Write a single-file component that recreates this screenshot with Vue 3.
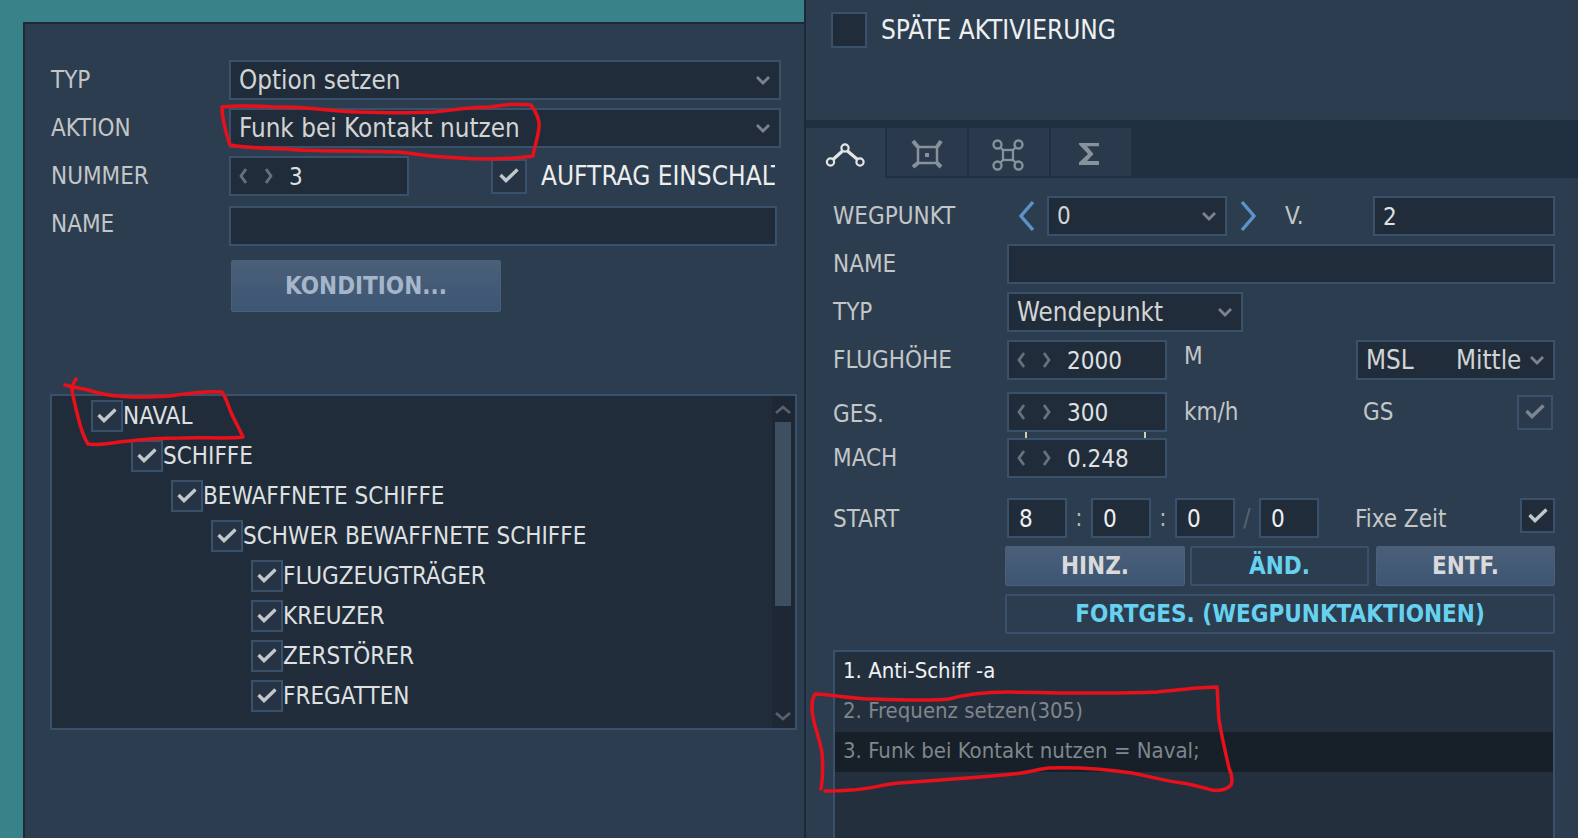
<script setup>
const tree = [
  { level: 0, text: 'NAVAL' },
  { level: 1, text: 'SCHIFFE' },
  { level: 2, text: 'BEWAFFNETE SCHIFFE' },
  { level: 3, text: 'SCHWER BEWAFFNETE SCHIFFE' },
  { level: 4, text: 'FLUGZEUGTRÄGER' },
  { level: 4, text: 'KREUZER' },
  { level: 4, text: 'ZERSTÖRER' },
  { level: 4, text: 'FREGATTEN' }
]
const actions = [
  { text: '1. Anti-Schiff -a', cls: 'on' },
  { text: '2. Frequenz setzen(305)', cls: 'off' },
  { text: '3. Funk bei Kontakt nutzen = Naval;', cls: 'off sel' }
]
const ink = [
  'M222 107 C250 104 270 108 286 107 C310 107 335 112 357 112 C385 113 415 113 434 112 C455 110 470 107 490 107 C505 104 522 104 531 105 C536 112 540 120 539 127 C538 138 534 148 533 156 C510 159 485 160 459 158 C440 157 425 156 408 153 C395 151 375 152 357 151 C330 151 305 151 286 149 C265 148 245 148 230 145 C225 130 222 118 222 107',
  'M65 385 C72 387 80 388 88 390 C98 393 108 396 119 396 C135 398 152 397 170 396 C190 393 208 391 222 392 C226 398 228 404 230 410 C234 420 240 430 243 437 C225 439 203 437 181 438 C160 438 145 439 129 441 C115 442 100 446 88 444 C82 435 80 425 77 413 C75 405 73 397 72 390 C72 386 74 382 76 379',
  'M821 789 C823 778 823 765 822 753 C820 738 813 725 812 710 C812 703 812 698 815 694 C835 695 855 699 874 699 C900 700 930 701 949 699 C970 693 990 692 1008 692 C1060 693 1110 694 1157 692 C1180 690 1200 687 1217 687 C1218 698 1218 710 1219 720 C1222 738 1226 755 1229 768 C1232 775 1233 780 1231 785 C1226 790 1218 791 1212 790 C1203 788 1192 784 1182 783 C1165 781 1148 776 1132 773 C1105 769 1075 767 1048 768 C1035 770 1025 773 1013 774 C975 778 935 780 899 783 C880 785 865 790 850 790 C840 791 832 791 825 791'
]
</script>

<template>
  <div class="page">
    <section class="left">
      <div class="window">
        <div class="row">
          <span class="label">TYP</span>
          <div class="field grow big"><span>Option setzen</span>
            <svg class="arrow" viewBox="0 0 14 8"><path d="M1 1 7 7 13 1" /></svg>
          </div>
        </div>
        <div class="row">
          <span class="label">AKTION</span>
          <div class="field grow big"><span>Funk bei Kontakt nutzen</span>
            <svg class="arrow" viewBox="0 0 14 8"><path d="M1 1 7 7 13 1" /></svg>
          </div>
        </div>
        <div class="row">
          <span class="label">NUMMER</span>
          <div class="field spin num-w">
            <svg class="spinner" viewBox="0 0 34 16"><path d="M7 1 2 8 7 15M27 1 32 8 27 15" /></svg>
            <span class="sv">3</span>
          </div>
          <div class="check mission">
            <svg viewBox="0 0 20 16"><path d="M1.500 7 7 12.500 18.500 1.500" /></svg>
          </div>
          <span class="clip">AUFTRAG EINSCHALTEN</span>
        </div>
        <div class="row name-row">
          <span class="label">NAME</span>
          <div class="field name-w"></div>
        </div>
        <button class="btn kond">KONDITION...</button>

        <div class="tree">
          <div class="tree-rows">
            <div v-for="item in tree" :key="item.text" class="tree-row" :style="{ paddingLeft: 39 + item.level * 40 + 'px' }">
              <div class="check small">
                <svg viewBox="0 0 20 16"><path d="M1.500 7 7 12.500 18.500 1.500" /></svg>
              </div>
              <span>{{ item.text }}</span>
            </div>
          </div>
          <div class="scroll">
            <svg class="sa" viewBox="0 0 16 8"><path d="M1 7 8 1 15 7" /></svg>
            <div class="thumb"></div>
            <svg class="sa down" viewBox="0 0 16 8"><path d="M1 1 8 7 15 1" /></svg>
          </div>
        </div>
      </div>
    </section>

    <section class="right">
      <div class="head">
        <div class="check late"></div>
        <span class="late-t">SPÄTE AKTIVIERUNG</span>
      </div>
      <div class="tabs">
        <div class="tab active">
          <svg class="ic" width="44" height="34" viewBox="0 0 44 34"><g fill="none" stroke="#e4e6e6" stroke-width="2.200"><circle cx="21" cy="12" r="3.600" /><circle cx="6.500" cy="26" r="3.600" /><circle cx="36" cy="26" r="3.600" /><path d="M18.500 15 9 23.500M23.500 15 33.500 23.500" stroke-width="3.200" /></g></svg>
        </div>
        <div class="tab">
          <svg class="ic" width="34" height="34" viewBox="0 0 34 34"><g fill="none" stroke="#88929a" stroke-width="2.500"><rect x="8" y="12" width="19" height="16" /><path d="M3 6 8 12M31 6 27 12M3 32 8 28M31 32 27 28" stroke-width="4" /></g><rect x="15" y="18" width="4" height="4" fill="#88929a" /></svg>
        </div>
        <div class="tab">
          <svg class="ic i3" width="34" height="34" viewBox="0 0 34 34"><g fill="none" stroke="#88929a" stroke-width="2.300"><circle cx="6.500" cy="6.500" r="4" /><circle cx="27.500" cy="6.500" r="4" /><circle cx="6.500" cy="27.500" r="4" /><circle cx="27.500" cy="27.500" r="4" /><rect x="12" y="12" width="10" height="10" /><path d="M9.500 9.500 12 12M24.500 9.500 22 12M9.500 24.500 12 22M24.500 24.500 22 22" /></g></svg>
        </div>
        <div class="tab">
          <svg class="ic i4" width="20" height="22" viewBox="0 0 20 22"><path d="M0 0H20V3.300H8L14.500 11 8 18H20V22H0V19.500L9 11 0 1.500Z" fill="#88929a" /></svg>
        </div>
      </div>

      <div class="wp">
        <div class="row">
          <span class="label r">WEGPUNKT</span>
          <svg class="nav" viewBox="0 0 18 32"><path d="M15 2 3 16 15 30" /></svg>
          <div class="field wp-sel"><span>0</span>
            <svg class="arrow" viewBox="0 0 14 8"><path d="M1 1 7 7 13 1" /></svg>
          </div>
          <svg class="nav" viewBox="0 0 18 32"><path d="M3 2 15 16 3 30" /></svg>
          <span class="v">V.</span>
          <div class="field v-f"><span class="sv">2</span></div>
        </div>
        <div class="row">
          <span class="label r">NAME</span>
          <div class="field grow"></div>
        </div>
        <div class="row">
          <span class="label r">TYP</span>
          <div class="field typ-w big"><span>Wendepunkt</span>
            <svg class="arrow" viewBox="0 0 14 8"><path d="M1 1 7 7 13 1" /></svg>
          </div>
        </div>
        <div class="row">
          <span class="label r">FLUGHÖHE</span>
          <div class="field spin sp-w">
            <svg class="spinner" viewBox="0 0 34 16"><path d="M7 1 2 8 7 15M27 1 32 8 27 15" /></svg>
            <span class="sv">2000</span>
          </div>
          <span class="unit up">M</span>
          <div class="field msl big"><span>MSL</span><span class="mittle">Mittle</span>
            <svg class="arrow" viewBox="0 0 14 8"><path d="M1 1 7 7 13 1" /></svg>
          </div>
        </div>
        <div class="row gap12">
          <span class="label r ges">GES.</span>
          <div class="field spin sp-w">
            <svg class="spinner" viewBox="0 0 34 16"><path d="M7 1 2 8 7 15M27 1 32 8 27 15" /></svg>
            <span class="sv">300</span>
          </div>
          <span class="unit">km/h</span>
          <span class="gs">GS</span>
          <div class="check gs-c">
            <svg viewBox="0 0 20 16"><path d="M1.500 7 7 12.500 18.500 1.500" /></svg>
          </div>
          <i class="tick t1"></i><i class="tick t2"></i>
        </div>
        <div class="row gap6">
          <span class="label r">MACH</span>
          <div class="field spin sp-w">
            <svg class="spinner" viewBox="0 0 34 16"><path d="M7 1 2 8 7 15M27 1 32 8 27 15" /></svg>
            <span class="sv">0.248</span>
          </div>
        </div>
        <div class="row gap20">
          <span class="label r st">START</span>
          <div class="field t"><span class="sv">8</span></div>
          <span class="sep">:</span>
          <div class="field t"><span class="sv">0</span></div>
          <span class="sep">:</span>
          <div class="field t"><span class="sv">0</span></div>
          <span class="sep dim">/</span>
          <div class="field t"><span class="sv">0</span></div>
          <span class="fixe">Fixe Zeit</span>
          <div class="check fx">
            <svg viewBox="0 0 20 16"><path d="M1.500 7 7 12.500 18.500 1.500" /></svg>
          </div>
        </div>
        <div class="row btns">
          <button class="btn b1 light">HINZ.</button>
          <button class="btn b2 flat cyan">ÄND.</button>
          <button class="btn b3 light">ENTF.</button>
        </div>
        <div class="row btns">
          <button class="btn flat cyan wide">FORTGES. (WEGPUNKTAKTIONEN)</button>
        </div>
        <div class="acts">
          <div v-for="a in actions" :key="a.text" class="act" :class="a.cls">{{ a.text }}</div>
        </div>
      </div>
    </section>

    <svg class="ink" width="1578" height="838" viewBox="0 0 1578 838">
      <path v-for="d in ink" :key="d" :d="d" />
    </svg>
  </div>
</template>

<style scoped>
.page {
  position: relative;
  display: flex;
  width: 1578px;
  height: 838px;
  overflow: hidden;
  background: #38838a;
  font-family: "DejaVu Sans Condensed", "DejaVu Sans", sans-serif;
  font-stretch: condensed;
  font-size: 24px;
  color: #d2d4d4;
}
.left {
  width: 804px;
  flex: none;
  padding: 22px 0 0 23px;
  box-sizing: border-box;
}
.window {
  height: 816px;
  box-sizing: border-box;
  background: #2d3d50;
  border-left: 2px solid #1c2a38;
  border-top: 2px solid #1c2a38;
  padding: 36px 0 0 26px;
}
.row {
  position: relative;
  display: flex;
  align-items: center;
  height: 40px;
  margin-bottom: 8px;
  padding-right: 23px;
}
.label {
  width: 178px;
  flex: none;
  color: #c3c6c7;
  white-space: nowrap;
}
.label.r {
  width: 174px;
}
.field {
  display: flex;
  align-items: center;
  height: 40px;
  box-sizing: border-box;
  background: #212c3b;
  border: 2px solid #3a516b;
  padding-left: 8px;
  position: relative;
  white-space: nowrap;
  flex: none;
}
.big {
  font-size: 25.8px;
}
.grow {
  flex: 1;
}
.arrow {
  position: absolute;
  right: 9px;
  top: 14px;
  width: 14px;
  height: 8px;
  overflow: visible;
  fill: none;
  stroke: #7a848d;
  stroke-width: 2.800;
}
.spinner {
  width: 34px;
  height: 16px;
  flex: none;
  fill: none;
  stroke: #65727f;
  stroke-width: 2.800;
  margin-right: 16px;
}
.sv {
  padding-top: 2px;
  color: #dfe1e1;
}
.num-w {
  width: 180px;
}
.check {
  display: flex;
  align-items: center;
  justify-content: center;
  box-sizing: border-box;
  background: #253344;
  border: 2px solid #3a516b;
  flex: none;
}
.check svg {
  width: 20px;
  height: 16px;
  overflow: visible;
  fill: none;
  stroke: #c2c7cb;
  stroke-width: 3.400;
}
.mission {
  width: 36px;
  height: 35px;
  margin-left: 82px;
}
.clip {
  width: 234px;
  margin-left: 14px;
  overflow: hidden;
  white-space: nowrap;
  font-size: 26px;
  color: #eceeee;
}
.name-row {
  margin-bottom: 0;
  padding-right: 27px;
  margin-top: 10px;
}
.name-row .label {
  margin-top: -4px;
}
.name-w {
  flex: 1;
}
.btn {
  display: block;
  font: inherit;
  font-stretch: condensed;
  font-weight: 700;
  box-sizing: border-box;
  border-radius: 2px;
  border: 1px solid #4b6078;
  background: linear-gradient(#4a5f78, #3d5674);
  color: #a5b6ca;
  padding: 0;
}
.kond {
  width: 270px;
  height: 52px;
  margin: 14px 0 0 180px;
}
.tree {
  display: flex;
  width: 747px;
  height: 336px;
  margin: 82px 0 0 -1px;
  box-sizing: border-box;
  background: #212c3b;
  border: 2px solid #3a516b;
}
.tree-rows {
  flex: 1;
  overflow: hidden;
}
.tree-row {
  display: flex;
  align-items: center;
  height: 40px;
  color: #dfe1e0;
  white-space: nowrap;
}
.small {
  width: 32px;
  height: 32px;
}
.scroll {
  width: 23px;
  background: #1e2835;
  position: relative;
  flex: none;
}
.sa {
  position: absolute;
  left: 3px;
  top: 10px;
  width: 16px;
  height: 8px;
  overflow: visible;
  fill: none;
  stroke: #56616c;
  stroke-width: 2.800;
}
.sa.down {
  top: 316px;
}
.thumb {
  position: absolute;
  left: 3px;
  top: 26px;
  width: 16px;
  height: 184px;
  background: #3f4f62;
}
.right {
  flex: 1;
  box-sizing: border-box;
  background: #2d3d50;
  border-left: 2px solid #1c2a38;
}
.head {
  display: flex;
  align-items: flex-start;
  height: 120px;
  box-sizing: border-box;
  padding: 12px 0 0 25px;
}
.late {
  width: 36px;
  height: 36px;
  background: #212c3b;
}
.late-t {
  margin-left: 14px;
  font-size: 26px;
  color: #eef0f0;
  line-height: 36px;
}
.tabs {
  display: flex;
  height: 58px;
  box-sizing: border-box;
  background: #213040;
  padding-top: 8px;
  gap: 2px;
}
.tab {
  display: flex;
  align-items: center;
  justify-content: center;
  width: 80px;
  height: 48px;
  background: #2a394b;
}
.tab.active {
  width: 79px;
  height: 50px;
  background: #2d3d50;
}
.ic {
  overflow: visible;
}
.i3 {
  margin: 5px 0 0 -3px;
}
.i4 {
  margin: 3px 0 0 -4px;
}
.wp {
  padding: 18px 0 0 27px;
}
.ges {
  margin-top: 4px;
}
.st {
  margin-top: 2px;
}
.nav {
  width: 18px;
  height: 32px;
  flex: none;
  fill: none;
  stroke: #5d93c8;
  stroke-width: 3.400;
}
.nav:first-of-type {
  margin-left: 11px;
  margin-right: 11px;
}
.wp-sel {
  width: 180px;
}
.wp-sel + .nav {
  margin-left: 12px;
}
.v {
  width: 88px;
  margin-left: 28px;
  color: #c3c6c7;
}
.v-f {
  flex: 1;
}
.typ-w {
  width: 236px;
}
.sp-w {
  width: 160px;
}
.unit {
  width: 172px;
  margin-left: 17px;
  color: #c3c6c7;
}
.unit.up {
  margin-top: -8px;
}
.msl {
  flex: 1;
}
.mittle {
  position: absolute;
  left: 98px;
}
.gs {
  width: 154px;
  margin-left: 7px;
  color: #c3c6c7;
}
.gs-c {
  width: 36px;
  height: 35px;
  background: #2a394b;
}
.gs-c svg {
  stroke: #7b868f;
}
.tick {
  position: absolute;
  top: 40px;
  width: 2px;
  height: 6px;
  background: #cfcfa8;
}
.t1 {
  left: 192px;
}
.t2 {
  left: 311px;
}
.gap12 {
  margin-top: 12px;
  margin-bottom: 6px;
}
.gap6 {
  margin-bottom: 20px;
}
.gap20 .field.t {
  width: 60px;
  padding-left: 10px;
}
.gap20 .field.t .sv {
  color: #eef0f0;
}
.sep {
  width: 24px;
  text-align: center;
  color: #b0b6bb;
  flex: none;
}
.sep.dim {
  color: #566473;
}
.fixe {
  width: 164px;
  margin: 2px 0 0 36px;
  color: #c3c6c7;
  flex: none;
}
.fx {
  width: 35px;
  height: 35px;
  margin: -5px 0 0 1px;
  background: #212c3b;
}
.btns {
  margin-left: 172px;
}
.btn.b1,
.btn.b2,
.btn.b3 {
  height: 40px;
  width: 180px;
  flex: none;
}
.btn.b2 {
  width: 179px;
  margin: 0 5px 0 5px;
}
.btn.b3 {
  width: 179px;
  margin-left: 2px;
}
.light {
  color: #d8dadb;
}
.btn.flat {
  background: #2d3d50;
  border: 2px solid #3a516b;
}
.cyan {
  color: #66d2f0;
}
.wide {
  flex: 1;
  height: 40px;
}
.acts {
  margin: 16px 23px 0 0;
  height: 200px;
  box-sizing: border-box;
  background: #242f3d;
  border: 2px solid #3a516b;
  border-bottom: 0;
  font-size: 22px;
}
.act {
  height: 40px;
  line-height: 38px;
  padding-left: 8px;
  white-space: nowrap;
}
.on {
  color: #f0f2f2;
}
.off {
  color: #7f868c;
}
.sel {
  background: #171f29;
}
.ink {
  position: absolute;
  left: 0;
  top: 0;
  pointer-events: none;
}
.ink path {
  fill: none;
  stroke: #e8101a;
  stroke-width: 3.500;
  stroke-linecap: round;
  stroke-linejoin: round;
}
</style>
